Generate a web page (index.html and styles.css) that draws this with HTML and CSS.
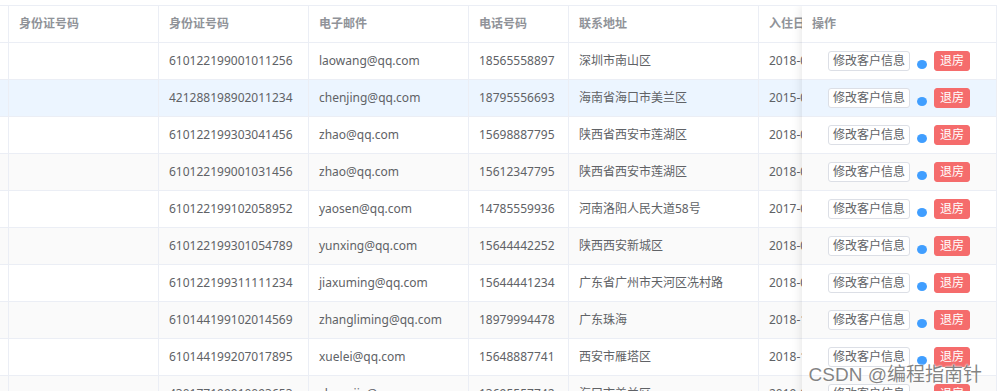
FILE: index.html
```html
<!DOCTYPE html>
<html lang="zh-CN">
<head>
<meta charset="utf-8">
<title>客户列表</title>
<link rel="stylesheet" href="styles.css">
</head>
<body>
<div class="table">
  <div class="main">
    <div class="row head">
      <div class="cell c0"></div>
      <div class="cell c1">身份证号码</div>
      <div class="cell c2">身份证号码</div>
      <div class="cell c3">电子邮件</div>
      <div class="cell c4">电话号码</div>
      <div class="cell c5">联系地址</div>
      <div class="cell c6">入住日期</div>
    </div>
    <div class="row"><div class="cell c0"></div><div class="cell c1"></div><div class="cell c2">610122199001011256</div><div class="cell c3">laowang@qq.com</div><div class="cell c4">18565558897</div><div class="cell c5">深圳市南山区</div><div class="cell c6">2018-05-12</div></div>
    <div class="row current"><div class="cell c0"></div><div class="cell c1"></div><div class="cell c2">421288198902011234</div><div class="cell c3">chenjing@qq.com</div><div class="cell c4">18795556693</div><div class="cell c5">海南省海口市美兰区</div><div class="cell c6">2015-06-08</div></div>
    <div class="row"><div class="cell c0"></div><div class="cell c1"></div><div class="cell c2">610122199303041456</div><div class="cell c3">zhao@qq.com</div><div class="cell c4">15698887795</div><div class="cell c5">陕西省西安市莲湖区</div><div class="cell c6">2018-03-21</div></div>
    <div class="row"><div class="cell c0"></div><div class="cell c1"></div><div class="cell c2">610122199001031456</div><div class="cell c3">zhao@qq.com</div><div class="cell c4">15612347795</div><div class="cell c5">陕西省西安市莲湖区</div><div class="cell c6">2018-04-02</div></div>
    <div class="row"><div class="cell c0"></div><div class="cell c1"></div><div class="cell c2">610122199102058952</div><div class="cell c3">yaosen@qq.com</div><div class="cell c4">14785559936</div><div class="cell c5">河南洛阳人民大道58号</div><div class="cell c6">2017-09-15</div></div>
    <div class="row"><div class="cell c0"></div><div class="cell c1"></div><div class="cell c2">610122199301054789</div><div class="cell c3">yunxing@qq.com</div><div class="cell c4">15644442252</div><div class="cell c5">陕西西安新城区</div><div class="cell c6">2018-07-11</div></div>
    <div class="row"><div class="cell c0"></div><div class="cell c1"></div><div class="cell c2">610122199311111234</div><div class="cell c3">jiaxuming@qq.com</div><div class="cell c4">15644441234</div><div class="cell c5">广东省广州市天河区冼村路</div><div class="cell c6">2018-08-19</div></div>
    <div class="row"><div class="cell c0"></div><div class="cell c1"></div><div class="cell c2">610144199102014569</div><div class="cell c3">zhangliming@qq.com</div><div class="cell c4">18979994478</div><div class="cell c5">广东珠海</div><div class="cell c6">2018-10-03</div></div>
    <div class="row"><div class="cell c0"></div><div class="cell c1"></div><div class="cell c2">610144199207017895</div><div class="cell c3">xuelei@qq.com</div><div class="cell c4">15648887741</div><div class="cell c5">西安市雁塔区</div><div class="cell c6">2018-11-26</div></div>
    <div class="row"><div class="cell c0"></div><div class="cell c1"></div><div class="cell c2">430177199910093653</div><div class="cell c3">zhangjia@qq.com</div><div class="cell c4">13695557742</div><div class="cell c5">海口市美兰区</div><div class="cell c6">2019-01-05</div></div>
  </div>

  <div class="fixed">
    <div class="row head"><div class="cell op-head">操作</div></div>
    <div class="row"><div class="cell ops"><span class="btn">修改客户信息</span><span class="dot"></span><span class="btn danger">退房</span></div></div>
    <div class="row current"><div class="cell ops"><span class="btn">修改客户信息</span><span class="dot"></span><span class="btn danger">退房</span></div></div>
    <div class="row"><div class="cell ops"><span class="btn">修改客户信息</span><span class="dot"></span><span class="btn danger">退房</span></div></div>
    <div class="row"><div class="cell ops"><span class="btn">修改客户信息</span><span class="dot"></span><span class="btn danger">退房</span></div></div>
    <div class="row"><div class="cell ops"><span class="btn">修改客户信息</span><span class="dot"></span><span class="btn danger">退房</span></div></div>
    <div class="row"><div class="cell ops"><span class="btn">修改客户信息</span><span class="dot"></span><span class="btn danger">退房</span></div></div>
    <div class="row"><div class="cell ops"><span class="btn">修改客户信息</span><span class="dot"></span><span class="btn danger">退房</span></div></div>
    <div class="row"><div class="cell ops"><span class="btn">修改客户信息</span><span class="dot"></span><span class="btn danger">退房</span></div></div>
    <div class="row"><div class="cell ops"><span class="btn">修改客户信息</span><span class="dot"></span><span class="btn danger">退房</span></div></div>
    <div class="row"><div class="cell ops"><span class="btn">修改客户信息</span><span class="dot"></span><span class="btn danger">退房</span></div></div>
  </div>

  <div class="watermark">CSDN @编程指南针</div>
</div>
</body>
</html>
```

FILE: styles.css
```css
html, body {
  margin: 0;
  padding: 0;
  background: #ffffff;
  overflow: hidden;
}

body {
  font-family: "Noto Sans", "Noto Sans CJK SC", sans-serif;
  font-size: 12px;
  color: #606266;
}

.table {
  position: relative;
  margin-top: 5px;
  width: 997px;
  height: 386px;
  box-sizing: border-box;
  border-top: 1px solid #ebeef5;
  border-right: 1px solid #ebeef5;
  overflow: hidden;
}

.main {
  width: 1000px;
}

.row {
  display: flex;
  height: 37px;
  box-sizing: border-box;
  border-bottom: 1px solid #ebeef5;
  background: #ffffff;
}

.row:nth-child(odd) {
  background: #fafafa;
}

.row.head {
  background: #ffffff;
}

.row.current {
  background: #ecf5ff;
}

.cell {
  flex: none;
  box-sizing: border-box;
  padding: 0 10px;
  border-right: 1px solid #ebeef5;
  line-height: 36px;
  white-space: nowrap;
  overflow: hidden;
}

.head .cell {
  color: #909399;
  font-weight: bold;
}

.c0 { width: 9px; padding: 0; }
.c1 { width: 150px; }
.c2 { width: 150px; }
.c3 { width: 160px; }
.c4 { width: 100px; }
.c5 { width: 190px; }
.c6 { width: 43px; padding-right: 0; border-right: none; }

.fixed {
  position: absolute;
  top: 0;
  right: 0;
  width: 194px;
  background: #ffffff;
  box-shadow: 0 0 10px rgba(0, 0, 0, 0.12);
}

.fixed .cell {
  width: 194px;
  border-right: none;
}

.ops {
  display: flex;
  justify-content: center;
  align-items: flex-start;
  padding-top: 8px;
  line-height: normal;
}

.btn {
  display: inline-block;
  box-sizing: border-box;
  height: 20px;
  line-height: 18px;
  padding: 0 4px;
  border: 1px solid #dcdfe6;
  border-radius: 3px;
  background: #ffffff;
  color: #606266;
  font-size: 12px;
}

.btn.danger {
  padding: 0 5px;
  border-color: #f56c6c;
  background: #f56c6c;
  color: #ffffff;
}

.dot {
  width: 10px;
  height: 9px;
  margin: 9px 7px 0;
  border-radius: 50%;
  background: #409eff;
}

.watermark {
  position: absolute;
  right: 14px;
  bottom: 5px;
  font-family: "Liberation Sans", "Noto Sans CJK SC", sans-serif;
  font-size: 19px;
  color: rgba(90, 90, 90, 0.75);
  text-shadow: 0 0 2px #ffffff, 0 0 1px #ffffff;
  white-space: nowrap;
}
```
